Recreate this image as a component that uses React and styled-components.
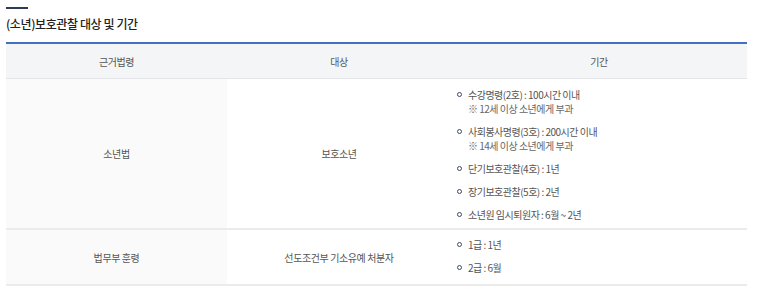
import React from 'react';
import styled, { createGlobalStyle } from 'styled-components';

const GlobalStyle = createGlobalStyle`
  body {
    margin: 0;
    background: #ffffff;
    font-family: "Noto Sans CJK KR", "Noto Sans", sans-serif;
  }
`;

const Wrap = styled.div`
  padding: 7px 10px 0 6px;
`;

const TitleBar = styled.div`
  width: 22px;
  height: 2px;
  background-color: #2c3b57;
`;

const Title = styled.h3`
  margin: 6px 0 0 0;
  font-size: 12px;
  font-weight: 500;
  line-height: 17px;
  letter-spacing: -0.4px;
  color: #222222;
`;

const Table = styled.table`
  margin-top: 10px;
  width: 741px;
  border-collapse: collapse;
  table-layout: fixed;
  border-top: 2px solid #4570c2;
`;

const HeadCell = styled.th`
  height: 34px;
  padding: 0;
  background-color: #f4f5f7;
  border-bottom: 1px solid #e4e6ea;
  font-size: 10px;
  font-weight: 400;
  letter-spacing: -0.4px;
  color: #555555;
  text-align: center;
`;

const Row = styled.tr`
  border-bottom: 2px solid #ebebeb;
`;

const Cell = styled.td`
  padding: 0;
  text-align: center;
  vertical-align: middle;
  font-size: 10px;
  letter-spacing: -0.4px;
  color: #555555;
  background-color: ${({ $shade }) => ($shade ? '#fafafa' : '#ffffff')};
`;

const ListCell = styled.td`
  padding: ${({ $pad }) => $pad};
  vertical-align: middle;
`;

const List = styled.ul`
  margin: 0;
  padding: 0 0 0 6px;
  list-style: none;
`;

const Item = styled.li`
  position: relative;
  padding-left: 11px;
  font-size: 10px;
  line-height: 14px;
  letter-spacing: -0.5px;
  color: #555555;
  & + & {
    margin-top: ${({ $gap }) => $gap || '8px'};
  }
  &::before {
    content: '';
    position: absolute;
    left: 0;
    top: 4px;
    width: 3px;
    height: 3px;
    border: 1.4px solid #3a4866;
    border-radius: 50%;
  }
`;

const Note = styled.span`
  display: block;
  color: #666666;
`;

const youthItems = [
  { text: '수강명령(2호) : 100시간 이내', note: '※ 12세 이상 소년에게 부과' },
  { text: '사회봉사명령(3호) : 200시간 이내', note: '※ 14세 이상 소년에게 부과' },
  { text: '단기보호관찰(4호) : 1년' },
  { text: '장기보호관찰(5호) : 2년' },
  { text: '소년원 임시퇴원자 : 6월 ~ 2년' },
];

const armyItems = [{ text: '1급 : 1년' }, { text: '2급 : 6월' }];

export default function App() {
  return (
    <Wrap>
      <GlobalStyle />
      <TitleBar />
      <Title>(소년)보호관찰 대상 및 기간</Title>
      <Table>
        <colgroup>
          <col style={{ width: '221px' }} />
          <col style={{ width: '224px' }} />
          <col style={{ width: '296px' }} />
        </colgroup>
        <thead>
          <tr>
            <HeadCell>근거법령</HeadCell>
            <HeadCell>대상</HeadCell>
            <HeadCell>기간</HeadCell>
          </tr>
        </thead>
        <tbody>
          <Row>
            <Cell $shade>소년법</Cell>
            <Cell>보호소년</Cell>
            <ListCell $pad="9px 0 6px 0">
              <List>
                {youthItems.map((it) => (
                  <Item key={it.text} $gap="6px">
                    {it.text}
                    {it.note && <Note>{it.note}</Note>}
                  </Item>
                ))}
              </List>
            </ListCell>
          </Row>
          <Row>
            <Cell $shade>법무부 훈령</Cell>
            <Cell>선도조건부 기소유예 처분자</Cell>
            <ListCell $pad="8px 0 9px 0">
              <List>
                {armyItems.map((it) => (
                  <Item key={it.text} $gap="9px">
                    {it.text}
                  </Item>
                ))}
              </List>
            </ListCell>
          </Row>
        </tbody>
      </Table>
    </Wrap>
  );
}
